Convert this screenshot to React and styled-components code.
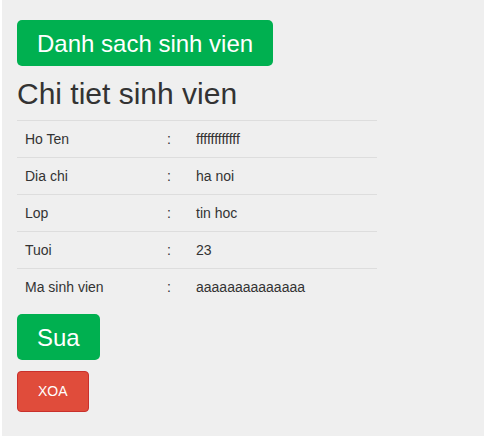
import React from "react";
import styled, { createGlobalStyle } from "styled-components";

const rows = [
  { label: "Ho Ten", value: "ffffffffffff" },
  { label: "Dia chi", value: "ha noi" },
  { label: "Lop", value: "tin hoc" },
  { label: "Tuoi", value: "23" },
  { label: "Ma sinh vien", value: "aaaaaaaaaaaaaa" },
];

const App = () => {
  return (
    <Page>
      <GlobalStyle />
      <BigButton>Danh sach sinh vien</BigButton>
      <Title>Chi tiet sinh vien</Title>
      <Table>
        {rows.map((r) => (
          <Row key={r.label}>
            <Cell>{r.label}</Cell>
            <Cell>:</Cell>
            <Cell>{r.value}</Cell>
          </Row>
        ))}
      </Table>
      <BigButton>Sua</BigButton>
      <DeleteButton>XOA</DeleteButton>
    </Page>
  );
};
export default App;

const GlobalStyle = createGlobalStyle`
  html, body {
    margin: 0;
    padding: 0;
    background: #ffffff;
  }
  body {
    font-family: "Liberation Sans", Arial, sans-serif;
    color: #333333;
  }
`;

const Page = styled.div`
  display: flex;
  flex-direction: column;
  align-items: flex-start;
  margin-left: 2px;
  height: 436px;
  padding: 20px 15px 0;
  box-sizing: border-box;
  background: #efefef;
`;

const BigButton = styled.button`
  font-family: "Liberation Sans", Arial, sans-serif;
  font-size: 24px;
  line-height: 34px;
  padding: 7px 20px 5px;
  color: #ffffff;
  background: #00b050;
  border: none;
  border-radius: 5px;
  cursor: pointer;
  margin-bottom: 9px;
`;

const Title = styled.h2`
  margin: 2px 0 10px;
  font-size: 30px;
  line-height: 33px;
  font-weight: normal;
  color: #333333;
`;

const Table = styled.div`
  width: 360px;
  display: flex;
  flex-direction: column;
  margin-bottom: 9px;
`;

const Row = styled.div`
  display: grid;
  grid-template-columns: 142px 29px 1fr;
  border-top: 1px solid #dddddd;
`;

const Cell = styled.div`
  padding: 8px;
  font-size: 14px;
  line-height: 20px;
  color: #333333;
`;

const DeleteButton = styled.button`
  margin-top: 2px;
  font-family: "Liberation Sans", Arial, sans-serif;
  font-size: 14px;
  line-height: 21px;
  padding: 9px 20px;
  color: #ffffff;
  background: #e04c3b;
  border: 1px solid #c9302c;
  border-radius: 4px;
  cursor: pointer;
`;
